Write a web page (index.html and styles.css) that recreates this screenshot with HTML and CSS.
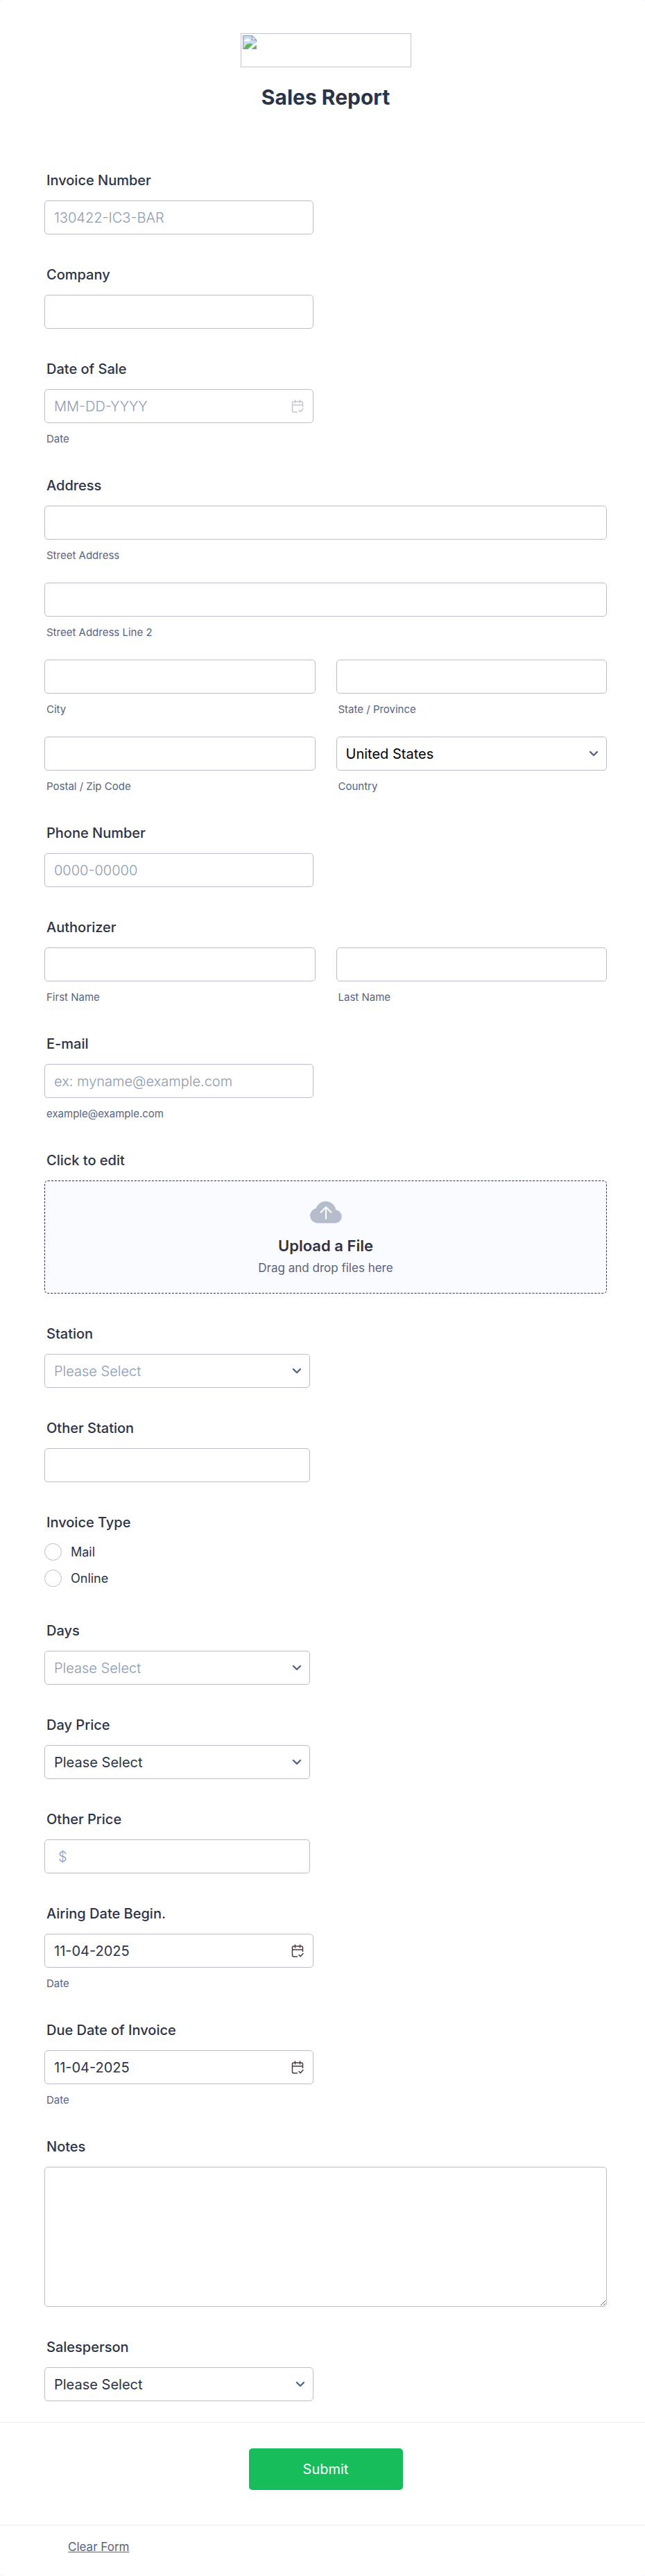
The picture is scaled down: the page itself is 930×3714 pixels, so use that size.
FILE: index.html
```html
<!DOCTYPE html>
<html lang="en">
<head>
    <meta charset="UTF-8">
    <meta name="viewport" content="width=device-width, initial-scale=1.0">
    <title>Sales Report</title>
    <link rel="stylesheet" href="styles.css">
</head>
<body>

    <!-- Shared icons -->
    <svg class="sprite" aria-hidden="true">
        <symbol id="chevron" viewBox="0 0 14 9">
            <path d="M2 2l5 5 5-5" fill="none" stroke="#57647e" stroke-width="2.4" stroke-linecap="round" stroke-linejoin="round"/>
        </symbol>
        <symbol id="calendar" viewBox="0 0 18 20">
            <path d="M8.500 18H3.500Q1.500 18 1.500 16V5Q1.500 3 3.500 3H14.500Q16.500 3 16.500 5V10.500M1.500 8H16.500M5.500 1V5M12.500 1V5M11 15.500L13.200 17.800L17 13.500" fill="none" stroke="currentColor" stroke-width="1.500" stroke-linecap="round" stroke-linejoin="round"/>
        </symbol>
    </svg>

    <form class="form">
        <header class="form-header">
            <div class="logo">
                <svg width="20" height="20" viewBox="0 0 20 20" aria-hidden="true">
                    <path d="M.5.500H13.500L19.500 6.500V10L9.500 19.500H.5Z" fill="#c6dcf5"/>
                    <path d="M2 8.500Q2 6 4.500 6Q6 3.500 8.500 5Q11 5 10.500 8.500Z" fill="#fff"/>
                    <path d="M1 19.500L5 13.500Q8 11 13 12L14 13L7.500 19.500Z" fill="#5bb947"/>
                    <path d="M13 19.500L19.500 14V19.500Z" fill="#5bb947"/>
                    <path d="M13.500.5V6.500H19.500Z" fill="#fff"/>
                    <path d="M8 19.500H.5V.5H13.500L19.500 6.500V9.500M13.500.5V6.500H19.500M13 19.500H19.500V14" fill="none" stroke="#9c98ad" stroke-width="1.200"/>
                </svg>
            </div>
            <h1>Sales Report</h1>
        </header>

        <div class="fields">
            <div class="field">
                <label class="label" for="invoiceNumber">Invoice Number</label>
                <input class="input medium" type="text" id="invoiceNumber" placeholder="130422-IC3-BAR">
            </div>

            <div class="field">
                <label class="label" for="company">Company</label>
                <input class="input medium" type="text" id="company">
            </div>

            <div class="field">
                <label class="label" for="saleDate">Date of Sale</label>
                <div class="control medium">
                    <input class="input" type="text" id="saleDate" placeholder="MM-DD-YYYY">
                    <svg class="calendar muted" aria-hidden="true"><use href="#calendar"/></svg>
                </div>
                <label class="sublabel" for="saleDate">Date</label>
            </div>

            <div class="field">
                <label class="label" for="street">Address</label>
                <div class="grid">
                    <div class="full">
                        <input class="input" type="text" id="street">
                        <label class="sublabel" for="street">Street Address</label>
                    </div>
                    <div class="full">
                        <input class="input" type="text" id="street2">
                        <label class="sublabel" for="street2">Street Address Line 2</label>
                    </div>
                    <div>
                        <input class="input" type="text" id="city">
                        <label class="sublabel" for="city">City</label>
                    </div>
                    <div>
                        <input class="input" type="text" id="state">
                        <label class="sublabel" for="state">State / Province</label>
                    </div>
                    <div>
                        <input class="input" type="text" id="zip">
                        <label class="sublabel" for="zip">Postal / Zip Code</label>
                    </div>
                    <div>
                        <div class="control">
                            <select class="input country" id="country">
                                <option>United States</option>
                            </select>
                            <svg class="chevron" aria-hidden="true"><use href="#chevron"/></svg>
                        </div>
                        <label class="sublabel" for="country">Country</label>
                    </div>
                </div>
            </div>

            <div class="field">
                <label class="label" for="phone">Phone Number</label>
                <input class="input medium" type="tel" id="phone" placeholder="0000-00000">
            </div>

            <div class="field">
                <label class="label" for="firstName">Authorizer</label>
                <div class="grid">
                    <div>
                        <input class="input" type="text" id="firstName">
                        <label class="sublabel" for="firstName">First Name</label>
                    </div>
                    <div>
                        <input class="input" type="text" id="lastName">
                        <label class="sublabel" for="lastName">Last Name</label>
                    </div>
                </div>
            </div>

            <div class="field">
                <label class="label" for="email">E-mail</label>
                <input class="input medium" type="email" id="email" placeholder="ex: myname@example.com">
                <label class="sublabel" for="email">example@example.com</label>
            </div>

            <div class="field">
                <span class="label" id="uploadLabel">Click to edit</span>
                <button class="upload" type="button" aria-describedby="uploadLabel">
                    <svg width="48" height="34" viewBox="0 0 48 34" aria-hidden="true">
                        <path d="M11 33.500A10.800 10.800 0 0 1 9.500 12.200A15 15 0 0 1 38.500 14.500A9.600 9.600 0 0 1 38.500 33.500Z" fill="#b5bccb"/>
                        <path d="M24 28V11M16 18.500L24 10.500L32 18.500" fill="none" stroke="#fff" stroke-width="2"/>
                    </svg>
                    <span class="upload-title">Upload a File</span>
                    <span class="upload-text">Drag and drop files here</span>
                </button>
            </div>

            <div class="field">
                <label class="label" for="station">Station</label>
                <div class="control small">
                    <select class="input empty" id="station">
                        <option>Please Select</option>
                    </select>
                    <svg class="chevron" aria-hidden="true"><use href="#chevron"/></svg>
                </div>
            </div>

            <div class="field">
                <label class="label" for="otherStation">Other Station</label>
                <input class="input small" type="text" id="otherStation">
            </div>

            <div class="field radios" role="radiogroup" aria-labelledby="typeLabel">
                <span class="label" id="typeLabel">Invoice Type</span>
                <label class="radio"><input type="radio" name="invoiceType" value="Mail">Mail</label>
                <label class="radio"><input type="radio" name="invoiceType" value="Online">Online</label>
            </div>

            <div class="field">
                <label class="label" for="days">Days</label>
                <div class="control small">
                    <select class="input empty" id="days">
                        <option>Please Select</option>
                    </select>
                    <svg class="chevron" aria-hidden="true"><use href="#chevron"/></svg>
                </div>
            </div>

            <div class="field">
                <label class="label" for="dayPrice">Day Price</label>
                <div class="control small">
                    <select class="input" id="dayPrice">
                        <option>Please Select</option>
                    </select>
                    <svg class="chevron" aria-hidden="true"><use href="#chevron"/></svg>
                </div>
            </div>

            <div class="field">
                <label class="label" for="otherPrice">Other Price</label>
                <input class="input small price" type="text" id="otherPrice" placeholder="$">
            </div>

            <div class="field">
                <label class="label" for="airingDate">Airing Date Begin.</label>
                <div class="control medium">
                    <input class="input" type="text" id="airingDate" value="11-04-2025">
                    <svg class="calendar" aria-hidden="true"><use href="#calendar"/></svg>
                </div>
                <label class="sublabel" for="airingDate">Date</label>
            </div>

            <div class="field">
                <label class="label" for="dueDate">Due Date of Invoice</label>
                <div class="control medium">
                    <input class="input" type="text" id="dueDate" value="11-04-2025">
                    <svg class="calendar" aria-hidden="true"><use href="#calendar"/></svg>
                </div>
                <label class="sublabel" for="dueDate">Date</label>
            </div>

            <div class="field">
                <label class="label" for="notes">Notes</label>
                <textarea class="input notes" id="notes"></textarea>
            </div>

            <div class="field">
                <label class="label" for="salesperson">Salesperson</label>
                <div class="control medium">
                    <select class="input" id="salesperson">
                        <option>Please Select</option>
                    </select>
                    <svg class="chevron" aria-hidden="true"><use href="#chevron"/></svg>
                </div>
            </div>
        </div>

        <div class="submit-row">
            <button class="submit" type="submit">Submit</button>
        </div>

        <div class="clear-row">
            <a href="#">Clear Form</a>
        </div>
    </form>

</body>
</html>
```

FILE: styles.css
```css
* {
    box-sizing: border-box;
}
body {
    margin: 0;
    background-color: #f3f3fe;
    color: #2c3345;
    font-family: Inter, sans-serif;
    font-size: 20px;
}
.sprite {
    display: none;
}
.form {
    min-height: 100vh;
    background-color: #fff;
    border-radius: 4px;
}

/* Header */
.form-header {
    display: flex;
    flex-direction: column;
    align-items: center;
    padding: 48px 55px 90px 64px;
}
.logo {
    width: 246px;
    height: 49px;
    padding: 2px;
    border: 1px solid #c3c5d0;
}
h1 {
    margin: 25px 0 0;
    font-size: 30px;
    line-height: 36px;
    font-weight: 700;
}

/* Fields */
.fields {
    padding: 0 55px 30px 64px;
}
.field {
    margin-bottom: 46px;
}
.field:last-child {
    margin-bottom: 0;
}
.label {
    display: block;
    margin-bottom: 17px;
    padding-left: 3px;
    line-height: 24px;
    font-weight: 500;
}
.sublabel {
    display: block;
    margin-top: 14px;
    padding-left: 3px;
    font-size: 15px;
    line-height: 18px;
    color: #57647e;
}
.input {
    display: block;
    width: 100%;
    height: 49px;
    padding: 0 13px;
    border: 1px solid #b8bdc9;
    border-radius: 5px;
    background-color: #fff;
    color: #2c3345;
    font-family: inherit;
    font-size: 20px;
    appearance: none;
}
.input::placeholder {
    color: #8d9ab0;
    font-weight: 300;
    opacity: 1;
}
.empty {
    color: #8d9ab0;
    font-weight: 300;
}
.country {
    color: #000;
}
.price {
    padding-left: 19px;
}
.medium {
    max-width: 388px;
}
.small {
    max-width: 383px;
}
.control {
    position: relative;
}
.chevron {
    position: absolute;
    top: 20px;
    right: 12px;
    width: 14px;
    height: 9px;
    pointer-events: none;
}
.calendar {
    position: absolute;
    top: 15px;
    right: 14px;
    width: 18px;
    height: 20px;
    color: #4b3844;
}
.muted {
    color: #c3c6d3;
}
.grid {
    display: grid;
    grid-template-columns: 1fr 1fr;
    gap: 30px;
}
.full {
    grid-column: 1 / -1;
}
.notes {
    height: 202px;
    padding: 13px;
    resize: vertical;
}

/* File upload */
.upload {
    display: flex;
    flex-direction: column;
    align-items: center;
    width: 100%;
    height: 163px;
    padding: 27px 0 0;
    border: 1px dashed #2c3345;
    border-radius: 5px;
    background-color: #fafbff;
    color: #2c3345;
    font-family: inherit;
    cursor: pointer;
}
.upload-title {
    margin-top: 18px;
    font-size: 22px;
    line-height: 28px;
    font-weight: 600;
}
.upload-text {
    margin-top: 6px;
    font-size: 17px;
    line-height: 24px;
    color: #57647e;
}

/* Radios */
.radios {
    display: flex;
    flex-direction: column;
    gap: 13px;
    margin-bottom: 51px;
}
.radios .label {
    margin-bottom: 5px;
}
.radio {
    display: flex;
    align-items: center;
    font-size: 18px;
    line-height: 25px;
}
.radio input {
    width: 25px;
    height: 25px;
    margin: 0 13px 0 0;
    border: 1px solid #b8bdc9;
    border-radius: 50%;
    appearance: none;
}
.radio input:checked {
    border: 7px solid #2c3345;
}

/* Footer */
.submit-row {
    display: flex;
    justify-content: center;
    padding: 37px 55px 50px 64px;
    border-top: 1px solid #e8ebf3;
    border-bottom: 1px solid #e8ebf3;
}
.submit {
    width: 222px;
    height: 60px;
    border: none;
    border-radius: 5px;
    background-color: #18bd5b;
    color: #fff;
    font-family: inherit;
    font-size: 20px;
    cursor: pointer;
}
.submit:hover {
    background-color: #16aa52;
}
.clear-row {
    padding: 19px 98px 28px;
    font-size: 17px;
    line-height: 24px;
}
.clear-row a {
    color: #57647e;
}
```
